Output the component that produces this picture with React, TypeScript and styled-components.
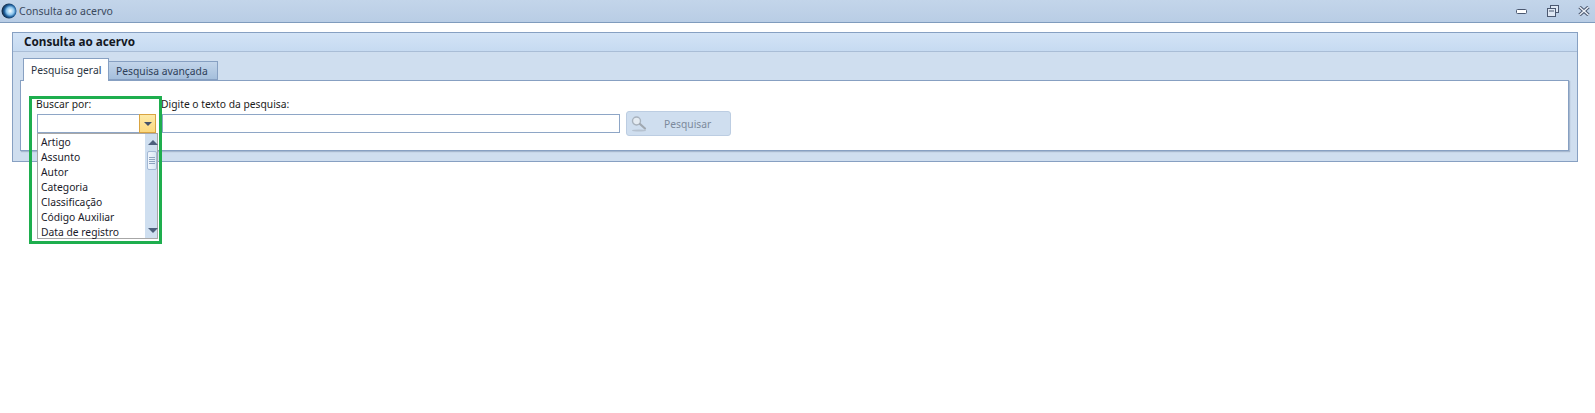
import styled, { createGlobalStyle } from 'styled-components';

const GlobalStyle = createGlobalStyle`
  html, body {
    margin: 0;
    padding: 0;
    background: #fff;
  }

  body {
    font-family: 'Noto Sans', 'Liberation Sans', sans-serif;
    font-size: 10.3px;
    color: #1a1a1a;
  }
`;

const Page = styled.div`
  position: relative;
  width: 1595px;
  height: 413px;
  overflow: hidden;
  background: #fff;
`;

const TitleBar = styled.header`
  display: flex;
  align-items: center;
  height: 22px;
  padding: 0 5px 0 1px;
  background: linear-gradient(#c3d5ea, #b9cde5);
  border-bottom: 1px solid #7f9bbd;
`;

const TitleText = styled.span`
  margin-left: 2px;
  color: #3b4a5e;
  font-size: 10.5px;
`;

const WindowControls = styled.div`
  display: flex;
  align-items: center;
  gap: 19px;
  margin-left: auto;
`;

const Panel = styled.section`
  margin: 9px 17px 0 12px;
  height: 130px;
  box-sizing: border-box;
  background: #cfdeef;
  border: 1px solid #87a0c2;
  display: flex;
  flex-direction: column;
`;

const PanelHeader = styled.h1`
  margin: 0;
  height: 18px;
  padding-left: 11px;
  background: linear-gradient(#d3e3f6, #c6daf1);
  border-bottom: 1px solid #a9bdd6;
  font-size: 11.7px;
  font-weight: 700;
  line-height: 16px;
  color: #14181f;
`;

const TabRow = styled.div`
  display: flex;
  align-items: flex-end;
  height: 22px;
  margin-top: 6px;
  padding-left: 10px;
`;

const Tab = styled.div<{ $active?: boolean }>`
  box-sizing: border-box;
  height: ${p => (p.$active ? 23 : 19)}px;
  width: ${p => (p.$active ? 86 : 109)}px;
  margin-bottom: ${p => (p.$active ? -1 : 0)}px;
  position: relative;
  padding-left: 7px;
  line-height: ${p => (p.$active ? 22 : 19)}px;
  background: ${p =>
    p.$active ? '#fff' : 'linear-gradient(#c3d5ea, #a5bfdc)'};
  border: 1px solid #87a0c2;
  border-bottom: ${p => (p.$active ? 'none' : '1px solid #87a0c2')};
  border-left: ${p => (p.$active ? '1px solid #87a0c2' : 'none')};
  color: ${p => (p.$active ? '#2a3442' : '#2e4058')};
  z-index: ${p => (p.$active ? 1 : 0)};
`;

const TabBody = styled.div`
  box-sizing: border-box;
  height: 71px;
  margin: 0 8px 0 7px;
  padding: 15px 0 0 16px;
  background: #fff;
  border: 1px solid #87a0c2;
  box-shadow: 1px 1px 1px rgba(90, 115, 150, 0.35);
  display: flex;
  align-items: flex-start;
  position: relative;
`;

const Field = styled.div<{ $width: number }>`
  display: flex;
  flex-direction: column;
  width: ${p => p.$width}px;
  margin-right: 6px;
`;

const FieldLabel = styled.label`
  height: 18px;
  line-height: 17px;
  margin-left: -1px;
  color: #1c1c1c;
`;

const TextBox = styled.div`
  box-sizing: border-box;
  height: 19px;
  background: #fff;
  border: 1px solid #8ea6c6;
  position: relative;
`;

const ComboArrow = styled.div`
  position: absolute;
  top: -1px;
  right: -1px;
  width: 17px;
  height: 19px;
  box-sizing: border-box;
  background: linear-gradient(#fdeaa8, #fcd97f);
  border: 1px solid #d9a441;
  display: flex;
  align-items: center;
  justify-content: center;

  &::after {
    content: '';
    border-left: 4px solid transparent;
    border-right: 4px solid transparent;
    border-top: 4px solid #44526a;
  }
`;

const DropList = styled.div`
  position: absolute;
  left: 37px;
  top: 133px;
  width: 121px;
  height: 106px;
  box-sizing: border-box;
  background: #fff;
  border: 1px solid #a7a7a7;
  display: flex;
  z-index: 3;
`;

const DropItems = styled.ul`
  flex: 1;
  margin: 0;
  padding: 1px 0 0 3px;
  list-style: none;
`;

const DropItem = styled.li`
  height: 15px;
  line-height: 15px;
  color: #1a1a2a;
  white-space: nowrap;
`;

const ScrollTrack = styled.div`
  width: 12px;
  background: #cfdff0;
  position: relative;
`;

const ScrollUp = styled.div`
  position: absolute;
  top: 6px;
  left: 3px;
  border-left: 5px solid transparent;
  border-right: 5px solid transparent;
  border-bottom: 5px solid #4d5f7c;
`;

const ScrollDown = styled.div`
  position: absolute;
  bottom: 5px;
  left: 3px;
  border-left: 5px solid transparent;
  border-right: 5px solid transparent;
  border-top: 5px solid #4d5f7c;
`;

const ScrollThumb = styled.div`
  position: absolute;
  top: 17px;
  left: 2px;
  width: 10px;
  height: 19px;
  box-sizing: border-box;
  background: linear-gradient(90deg, #f2f7fd, #d9e6f4);
  border: 1px solid #a3b8d4;
  border-radius: 2px;
  display: flex;
  flex-direction: column;
  justify-content: center;
  gap: 1px;
  padding: 0 1px;

  span {
    height: 1px;
    background: #8ea3bf;
  }
`;

const SearchButton = styled.button`
  box-sizing: border-box;
  width: 105px;
  height: 25px;
  margin-top: 15px;
  padding: 0 0 0 4px;
  display: flex;
  align-items: center;
  background: #cfdeef;
  border: 1px solid #bccde2;
  border-radius: 3px;
  color: #7c8a9c;
  font: inherit;
`;

const ButtonLabel = styled.span`
  margin-left: 17px;
`;

const Highlight = styled.div`
  position: absolute;
  left: 29px;
  top: 96px;
  width: 133px;
  height: 148px;
  box-sizing: border-box;
  border: 3px solid #1eae4e;
  pointer-events: none;
  z-index: 4;
`;

function Orb() {
  return (
    <svg width="16" height="16" viewBox="0 0 16 16">
      <defs>
        <radialGradient id="orb" cx="58%" cy="50%" r="55%">
          <stop offset="0%" stopColor="#f4fbff" />
          <stop offset="45%" stopColor="#8cc6ee" />
          <stop offset="72%" stopColor="#1f5f9c" />
          <stop offset="100%" stopColor="#13273f" />
        </radialGradient>
      </defs>
      <circle cx="8" cy="8" r="7.5" fill="url(#orb)" />
    </svg>
  );
}

function Minimize() {
  return (
    <svg width="12" height="7" viewBox="0 0 12 7">
      <rect x="0.5" y="1.5" width="10" height="4" rx="1" fill="#fff" stroke="#4b5870" />
    </svg>
  );
}

function Restore() {
  return (
    <svg width="12" height="12" viewBox="0 0 12 12">
      <rect x="3.5" y="0.5" width="8" height="7" fill="#dfe8f4" stroke="#4b5870" />
      <rect x="0.5" y="3.5" width="8" height="8" fill="#dfe8f4" stroke="#4b5870" />
      <path d="M2 6h5" stroke="#4b5870" />
    </svg>
  );
}

function Close() {
  return (
    <svg width="12" height="10" viewBox="0 0 12 10">
      <path d="M1.5 1 6 5l4.5-4M1.5 9 6 5l4.5 4" fill="none" stroke="#4b5870" strokeWidth="3.4" />
      <path d="M1.5 1 6 5l4.5-4M1.5 9 6 5l4.5 4" fill="none" stroke="#eef3f9" strokeWidth="1.4" />
    </svg>
  );
}

function Magnifier() {
  return (
    <svg width="16" height="16" viewBox="0 0 16 16">
      <ellipse cx="8" cy="14.5" rx="7" ry="1" fill="#b6c2d0" />
      <circle cx="5.5" cy="5" r="4" fill="#e4ebf2" stroke="#a8b2bd" strokeWidth="1.4" />
      <path d="M9 8l5 4.5" stroke="#a0a8b0" strokeWidth="2.2" strokeLinecap="round" />
    </svg>
  );
}

const options = [
  'Artigo',
  'Assunto',
  'Autor',
  'Categoria',
  'Classificação',
  'Código Auxiliar',
  'Data de registro',
];

export default function App() {
  return (
    <Page>
      <GlobalStyle />
      <TitleBar>
        <Orb />
        <TitleText>Consulta ao acervo</TitleText>
        <WindowControls>
          <Minimize />
          <Restore />
          <Close />
        </WindowControls>
      </TitleBar>

      <Panel>
        <PanelHeader>Consulta ao acervo</PanelHeader>
        <TabRow>
          <Tab $active>Pesquisa geral</Tab>
          <Tab>Pesquisa avançada</Tab>
        </TabRow>
        <TabBody>
          <Field $width={119}>
            <FieldLabel>Buscar por:</FieldLabel>
            <TextBox>
              <ComboArrow />
            </TextBox>
          </Field>
          <Field $width={458}>
            <FieldLabel>Digite o texto da pesquisa:</FieldLabel>
            <TextBox />
          </Field>
          <SearchButton disabled>
            <Magnifier />
            <ButtonLabel>Pesquisar</ButtonLabel>
          </SearchButton>
        </TabBody>
      </Panel>

      <DropList>
        <DropItems>
          {options.map(o => (
            <DropItem key={o}>{o}</DropItem>
          ))}
        </DropItems>
        <ScrollTrack>
          <ScrollUp />
          <ScrollThumb>
            <span />
            <span />
            <span />
            <span />
          </ScrollThumb>
          <ScrollDown />
        </ScrollTrack>
      </DropList>
      <Highlight />
    </Page>
  );
}
